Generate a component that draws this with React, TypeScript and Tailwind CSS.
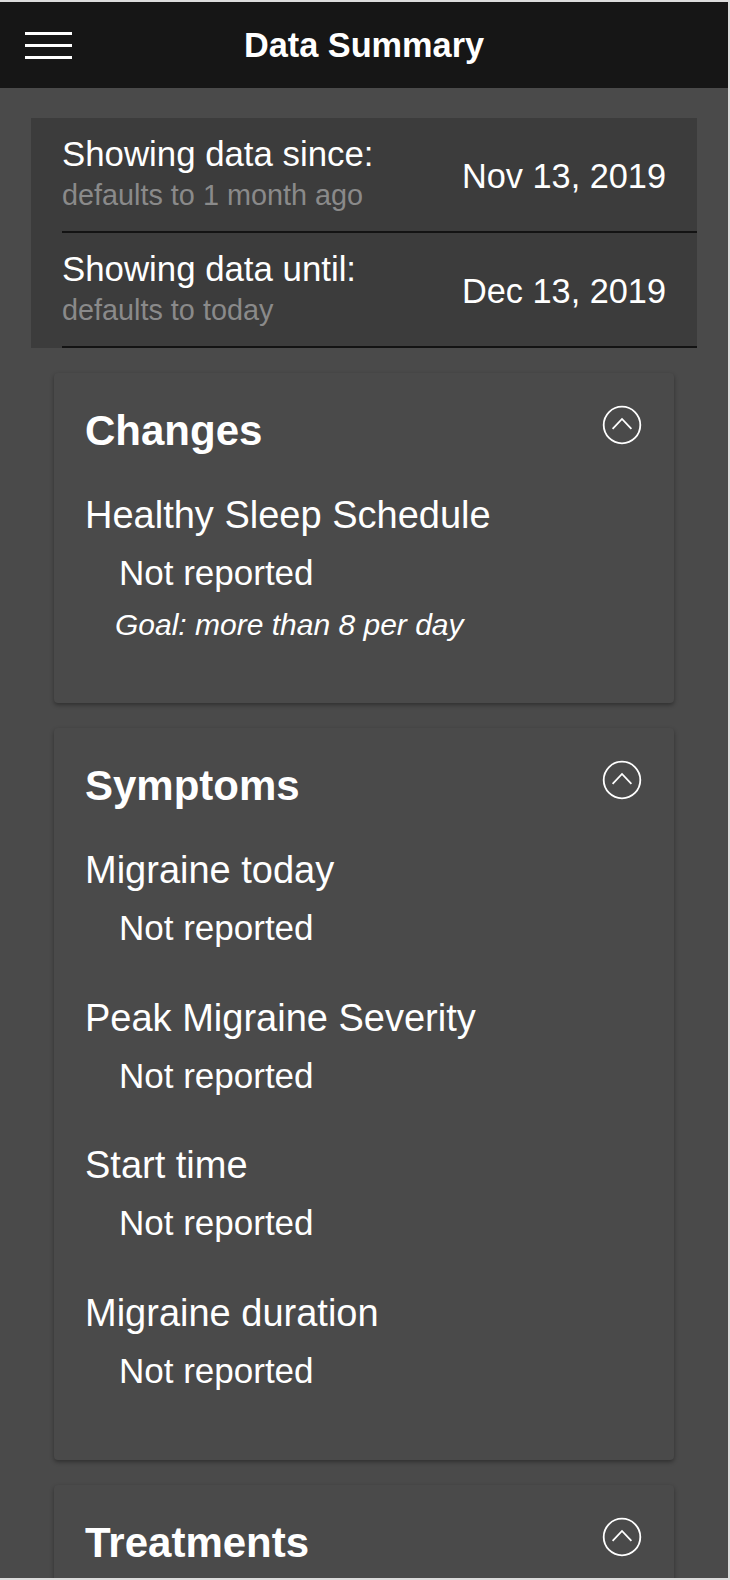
import React from "react";

function Chevron() {
  return (
    <svg width="40" height="40" viewBox="0 0 40 40" fill="none" className="shrink-0">
      <circle cx="20" cy="20" r="18.3" stroke="white" strokeWidth="1.8" />
      <polyline points="10.6,23.8 20,14 29.4,23.8" stroke="white" strokeWidth="1.8" fill="none" strokeLinejoin="miter" />
    </svg>
  );
}

function Item({ label, goal }: { label: string; goal?: string }) {
  return (
    <div className="flex flex-col">
      <div className="text-[38px] leading-[44px] text-white">{label}</div>
      <div className="mt-[16px] pl-[34px] text-[35px] leading-[40px] text-white">Not reported</div>
      {goal && (
        <div className="mt-[14px] pl-[30px] text-[30px] leading-[36px] italic text-white">{goal}</div>
      )}
    </div>
  );
}

function Card({ title, children, pb }: { title: string; children?: React.ReactNode; pb: string }) {
  return (
    <div className={`mx-[54px] shrink-0 rounded-[4px] bg-[#4a4a4a] px-[31px] pt-[33px] shadow-[0_2px_4px_rgba(0,0,0,0.35)] ${pb}`}>
      <div className="flex h-[50px] items-start justify-between">
        <div className="text-[42px] font-bold leading-[50px] text-white">{title}</div>
        <div className="mr-[1px] -mt-[1px]">
          <Chevron />
        </div>
      </div>
      {children}
    </div>
  );
}

function DateRow({ title, sub, date }: { title: string; sub: string; date: string }) {
  return (
    <div className="ml-[31px] flex items-center justify-between border-b-2 border-[#131313] pb-[14px] pr-[31px] pt-[17px]">
      <div className="flex flex-col">
        <div className="text-[34.8px] leading-[38px] text-white">{title}</div>
        <div className="text-[28.8px] leading-[44px] text-[#8a8a8a]">{sub}</div>
      </div>
      <div className="text-[34.3px] leading-[38px] text-white">{date}</div>
    </div>
  );
}

export default function App() {
  return (
    <div className="flex h-[1580px] w-[730px] flex-col overflow-hidden border-b-2 border-r-2 border-t-2 border-[#dcdcdc] bg-[#4a4a4a] font-['Liberation_Sans',Arial,sans-serif]">
      <div className="grid h-[86px] shrink-0 grid-cols-[1fr_auto_1fr] items-center bg-[#161616]">
        <div className="flex flex-col gap-[9px] pl-[25px]">
          <div className="h-[3px] w-[47px] bg-white" />
          <div className="h-[3px] w-[47px] bg-white" />
          <div className="h-[3px] w-[47px] bg-white" />
        </div>
        <div className="text-[34.3px] font-bold leading-[40px] text-white">Data Summary</div>
        <div />
      </div>

      <div className="flex flex-1 flex-col overflow-hidden">
        <div className="mx-[31px] mt-[30px] shrink-0 bg-[#3c3c3c]">
          <DateRow title="Showing data since:" sub="defaults to 1 month ago" date="Nov 13, 2019" />
          <DateRow title="Showing data until:" sub="defaults to today" date="Dec 13, 2019" />
        </div>

        <div className="mt-[25px] flex flex-col gap-[25px]">
          <Card title="Changes" pb="pb-[60px]">
            <div className="mt-[37px]">
              <Item label="Healthy Sleep Schedule" goal="Goal: more than 8 per day" />
            </div>
          </Card>

          <Card title="Symptoms" pb="pb-[69px]">
            <div className="mt-[37px] flex flex-col gap-[47.5px]">
              <Item label="Migraine today" />
              <Item label="Peak Migraine Severity" />
              <Item label="Start time" />
              <Item label="Migraine duration" />
            </div>
          </Card>

          <Card title="Treatments" pb="pb-[60px]" />
        </div>
      </div>
    </div>
  );
}
